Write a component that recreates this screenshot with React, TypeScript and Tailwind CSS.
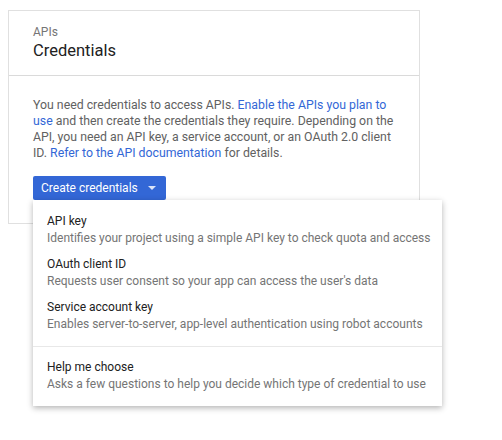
const items = [
  { title: "API key", desc: "Identifies your project using a simple API key to check quota and access" },
  { title: "OAuth client ID", desc: "Requests user consent so your app can access the user's data" },
  { title: "Service account key", desc: "Enables server-to-server, app-level authentication using robot accounts" },
];

function MenuItem({ title, desc }: { title: string; desc: string }) {
  return (
    <div className="pl-[14px] pr-2">
      <div className="text-[12px] leading-[17px] text-[#212121]">{title}</div>
      <div className="whitespace-nowrap text-[12px] leading-[17px] text-[#757575]">{desc}</div>
    </div>
  );
}

export default function App() {
  return (
    <div className="min-h-[440px] w-[502px] bg-white pl-2 pt-[10px] font-['Roboto',sans-serif]">
      <div className="relative w-[412px] border border-[#e0e0e0] bg-white">
        <div className="h-[65px] border-b border-[#dadada] px-6 pt-[14px]">
          <div className="text-[12px] leading-[14px] text-[#757575]">APIs</div>
          <div className="mt-[1px] text-[16.5px] leading-[22px] text-[#212121]">Credentials</div>
        </div>
        <div className="pb-[23px] pl-6 pr-4 pt-[21px]">
          <p className="text-[12.3px] leading-[16px] text-[#616161]">
            You need credentials to access APIs.{" "}
            <a className="text-[#3367d6]">Enable the APIs you plan to use</a> and then create the
            credentials they require. Depending on the API, you need an API key, a service account, or
            an OAuth 2.0 client ID. <a className="text-[#3367d6]">Refer to the API documentation</a> for
            details.
          </p>
          <button className="mt-[15px] flex h-6 items-center gap-[10px] rounded-[2px] bg-[#3367d6] pl-[8px] pr-[10px] text-[12px] text-white">
            Create credentials
            <svg width="8" height="4" viewBox="0 0 8 4">
              <path d="M0 0h8L4 4z" fill="#dbe4f8" />
            </svg>
          </button>
        </div>
        <div className="absolute left-[24px] top-[189px] z-10 w-[409px] bg-white pb-[13px] pt-[13px] shadow-[0_2px_6px_rgba(0,0,0,0.3)]">
          <div className="flex flex-col gap-[9px]">
            {items.map((it) => (
              <MenuItem key={it.title} {...it} />
            ))}
          </div>
          <div className="mb-[12px] mt-[13px] border-t border-[#e8e8e8]" />
          <MenuItem title="Help me choose" desc="Asks a few questions to help you decide which type of credential to use" />
        </div>
      </div>
    </div>
  );
}
